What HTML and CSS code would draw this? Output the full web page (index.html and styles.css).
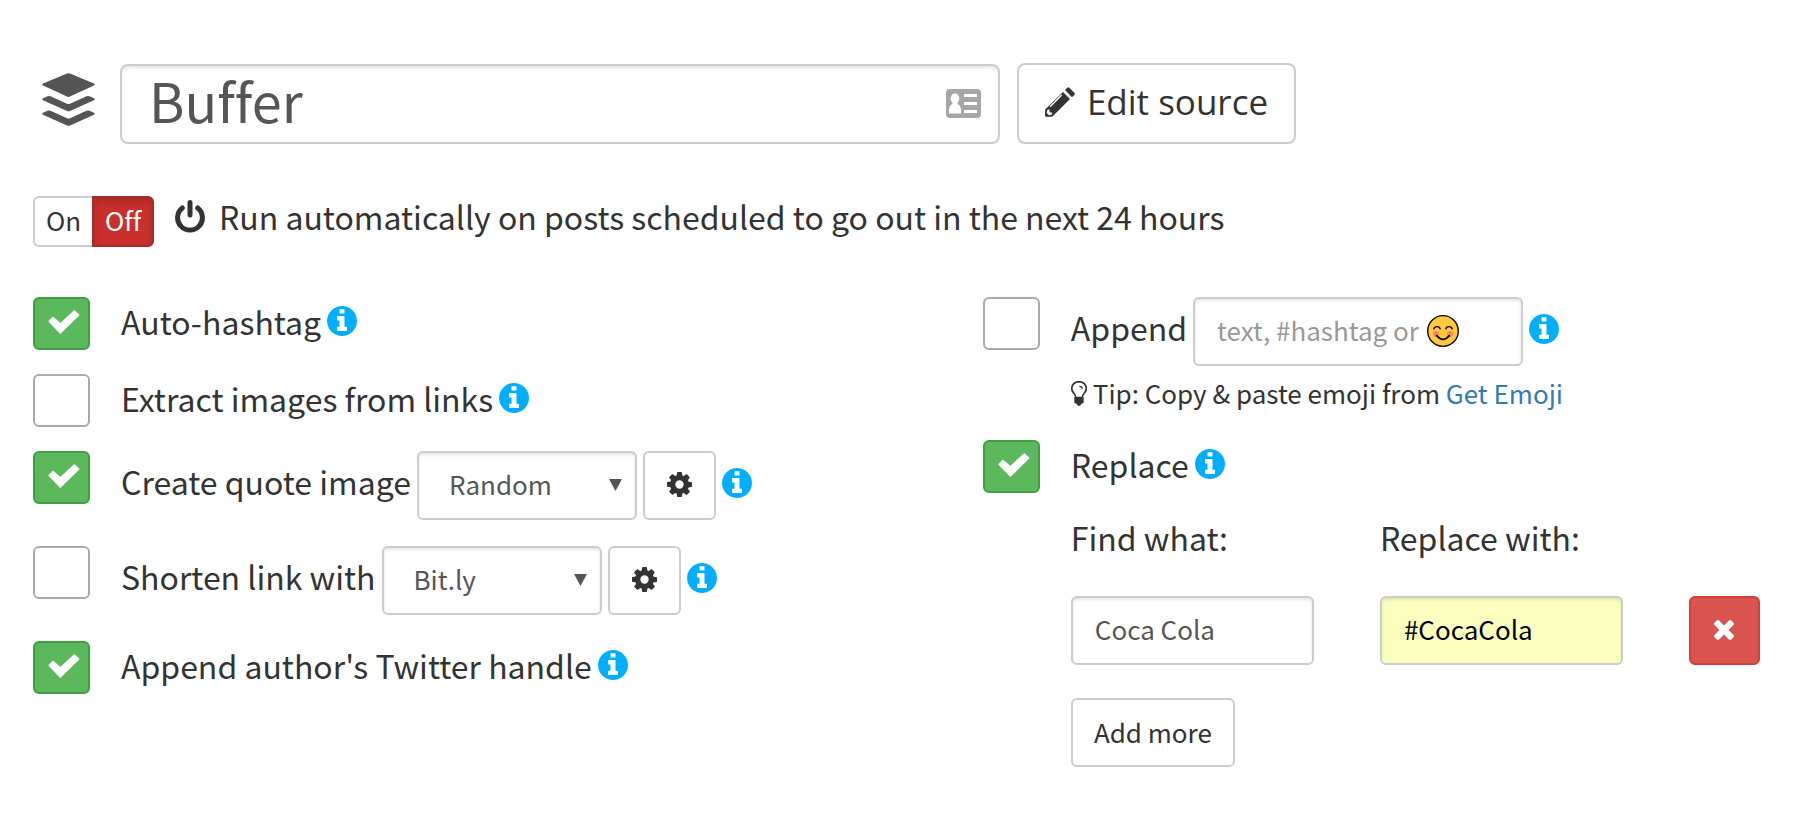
FILE: index.html
```html
<!DOCTYPE html>
<html lang="en">
<head>
  <meta charset="UTF-8">
  <title>Buffer</title>
  <meta name="viewport" content="width=device-width, initial-scale=1.0">
  <link rel="stylesheet" href="styles.css">
</head>
<body>
  <!-- shared icons -->
  <svg class="sprite" aria-hidden="true">
    <symbol id="info" viewBox="128 128 1536 1536">
      <path d="M1152 1376v-160q0-14-9-23t-23-9h-96v-512q0-14-9-23t-23-9h-320q-14 0-23 9t-9 23v160q0 14 9 23t23 9h96v320h-96q-14 0-23 9t-9 23v160q0 14 9 23t23 9h448q14 0 23-9t9-23zm-128-896v-160q0-14-9-23t-23-9h-192q-14 0-23 9t-9 23v160q0 14 9 23t23 9h192q14 0 23-9t9-23zm640 416q0 209-103 385.5t-279.5 279.5-385.5 103-385.5-103-279.5-279.5-103-385.5 103-385.5 279.5-279.5 385.5-103 385.5 103 279.5 279.5 103 385.5z"/>
    </symbol>
    <symbol id="check" viewBox="0 0 94 72">
      <path d="M3 34L14 23L36 42L78 3L91 15L36 69Z" stroke="currentColor" stroke-width="5" stroke-linejoin="round"/>
    </symbol>
    <symbol id="cog" viewBox="128 128 1536 1536">
      <path d="M1152 896q0-106-75-181t-181-75-181 75-75 181 75 181 181 75 181-75 75-181zm512-109v222q0 12-8 23t-20 13l-185 28q-19 54-39 91 35 50 107 138 10 12 10 25t-9 23q-27 37-99 108t-94 71q-12 0-26-9l-138-108q-44 23-91 38-16 136-29 186-7 28-36 28h-222q-14 0-24.5-8.5t-11.5-21.5l-28-184q-49-16-90-37l-141 107q-10 9-25 9-14 0-25-11-126-114-165-168-7-10-7-23 0-12 8-23 15-21 51-66.5t54-70.5q-27-50-41-99l-183-27q-13-2-21-12.5t-8-23.5v-222q0-12 8-23t19-13l186-28q14-46 39-92-40-57-107-138-10-12-10-24 0-10 9-23 26-36 98.5-107.5t94.5-71.5q13 0 26 10l138 107q44-23 91-38 16-136 29-186 7-28 36-28h222q14 0 24.5 8.5t11.5 21.5l28 184q49 16 90 37l142-107q9-9 24-9 13 0 25 10 129 119 165 170 7 8 7 22 0 12-8 23-15 21-51 66.5t-54 70.5q26 50 41 98l183 28q13 2 21 12.5t8 23.5z"/>
    </symbol>
    <symbol id="caret" viewBox="0 0 13 12">
      <path d="M0 0h13L6.5 12z"/>
    </symbol>
  </svg>

  <main class="page">
    <header class="header">
      <svg class="logo" viewBox="0 0 53 53" aria-hidden="true">
        <path d="M1 10.500L25 .5q1.500-.6 3 0L52 10.500q1.500 1 0 2L28 23.600q-1.500.6-3 0L1 12.500q-1.500-1 0-2z"/>
        <path d="M1 25.300L5.500 23.300q1.500-.5 3 0L25 30.800q1.500.6 3 0L44.500 23.300q1.500-.5 3 0L52 25.300q1.500 1 0 2L28 38q-1.500.6-3 0L1 27.300q-1.500-1 0-2z"/>
        <path d="M1 39.700L5.500 37.700q1.500-.5 3 0L25 45.200q1.500.6 3 0L44.500 37.700q1.500-.5 3 0L52 39.700q1.500 1 0 2L28 52.500q-1.500.6-3 0L1 41.700q-1.500-1 0-2z"/>
      </svg>
      <div class="name-box">
        <input class="field name" type="text" value="Buffer" aria-label="Name">
        <svg class="card-icon" viewBox="0 0 35 29" aria-hidden="true">
          <rect width="35" height="29" rx="4" fill="#a6a6a6"/>
          <g fill="#fff">
            <ellipse cx="9" cy="9.500" rx="4.300" ry="5"/>
            <path d="M6.500 13h5v2q3.500 1.500 3.500 6v3.500H3V21q0-4.500 3.500-6z"/>
            <path d="M18 5h13v3H18zM18 13h13v3H18zM18 21h13v3H18z"/>
          </g>
        </svg>
      </div>
      <button class="btn edit" type="button">
        <svg class="pencil" viewBox="0 0 90 90" aria-hidden="true">
          <path d="M54 15L75 36L24 87Q22 89 19 89H3Q0 89 0 86V71Q0 68 2 66Z"/>
          <path d="M60 9L66 3Q70-1 74 3L88 17Q92 21 87 25L81 31Z"/>
          <path d="M15 59L50 24" fill="none" stroke="#fff" stroke-width="4"/>
          <path d="M7 69L13 67L14 76L22 77L20 83L12 85L5 78Z" fill="#fff"/>
        </svg>
        Edit source
      </button>
    </header>

    <section class="auto">
      <div class="toggle">
        <button type="button">On</button><button class="active" type="button">Off</button>
      </div>
      <p class="auto-text">
        <svg class="power" viewBox="0 0 30 33" stroke="currentColor" aria-hidden="true">
          <path d="M7.300 8A12.400 12.400 0 1 0 22.700 8" stroke-width="5" stroke-linecap="round"/>
          <path d="M15 2.500V15" stroke-width="5" stroke-linecap="round"/>
        </svg>
        Run automatically on posts scheduled to go out in the next 24 hours
      </p>
    </section>

    <div class="columns">
      <section class="column">
        <div class="option">
          <span class="tick"><input type="checkbox" id="hashtag" checked><svg><use href="#check"/></svg></span>
          <div class="line">
            <label for="hashtag">Auto-hashtag</label>
            <svg class="info"><use href="#info"/></svg>
          </div>
        </div>
        <div class="option">
          <span class="tick"><input type="checkbox" id="extract"><svg><use href="#check"/></svg></span>
          <div class="line">
            <label for="extract">Extract images from links</label>
            <svg class="info"><use href="#info"/></svg>
          </div>
        </div>
        <div class="option">
          <span class="tick"><input type="checkbox" id="quote" checked><svg><use href="#check"/></svg></span>
          <div class="line controls">
            <label for="quote">Create quote image</label>
            <span class="select">
              <select class="field" aria-label="Quote image"><option>Random</option></select>
              <svg><use href="#caret"/></svg>
            </span>
            <button class="btn square" type="button" aria-label="Quote settings"><svg class="cog"><use href="#cog"/></svg></button>
            <svg class="info"><use href="#info"/></svg>
          </div>
        </div>
        <div class="option">
          <span class="tick"><input type="checkbox" id="shorten"><svg><use href="#check"/></svg></span>
          <div class="line controls">
            <label for="shorten">Shorten link with</label>
            <span class="select">
              <select class="field" aria-label="Link shortener"><option>Bit.ly</option></select>
              <svg><use href="#caret"/></svg>
            </span>
            <button class="btn square" type="button" aria-label="Shortener settings"><svg class="cog"><use href="#cog"/></svg></button>
            <svg class="info"><use href="#info"/></svg>
          </div>
        </div>
        <div class="option">
          <span class="tick"><input type="checkbox" id="author" checked><svg><use href="#check"/></svg></span>
          <div class="line">
            <label for="author">Append author's Twitter handle</label>
            <svg class="info"><use href="#info"/></svg>
          </div>
        </div>
      </section>

      <section class="column">
        <div class="option">
          <span class="tick"><input type="checkbox" id="append"><svg><use href="#check"/></svg></span>
          <div>
            <div class="line controls">
              <label for="append">Append</label>
              <span class="append-box">
                <input class="field" type="text" placeholder="text, #hashtag or" aria-label="Text to append">
                <svg class="smile" viewBox="0 0 96 96" aria-hidden="true">
                  <circle cx="48" cy="48" r="46" fill="#ffc83d" stroke="#000" stroke-width="4"/>
                  <circle cx="27" cy="57" r="9" fill="#ff8257"/>
                  <circle cx="69" cy="57" r="9" fill="#ff8257"/>
                  <path d="M20 43Q22 35 30 35T40 43M56 43Q58 35 66 35T76 43" fill="none" stroke="#000" stroke-width="4"/>
                  <path d="M29 62Q48 84 67 62" fill="none" stroke="#000" stroke-width="5" stroke-linecap="round"/>
                </svg>
              </span>
              <svg class="info"><use href="#info"/></svg>
            </div>
            <p class="tip">
              <svg class="bulb" viewBox="0 0 48 75" aria-hidden="true">
                <path d="M14 50Q14 43 8 36Q2 30 2 22Q4 3 24 2Q44 3 46 22Q46 30 40 36Q34 43 34 50Z" fill="none" stroke="currentColor" stroke-width="5"/>
                <path d="M10 49H38V65L31 69Q28 75 24 75T17 69L10 65Z"/>
                <path d="M25 16Q34 16 34 23" fill="none" stroke="currentColor" stroke-width="4"/>
              </svg>
              <span>Tip: Copy &amp; paste emoji from <a href="#">Get Emoji</a></span>
            </p>
          </div>
        </div>
        <div class="option">
          <span class="tick"><input type="checkbox" id="replace" checked><svg><use href="#check"/></svg></span>
          <div>
            <div class="line">
              <label for="replace">Replace</label>
              <svg class="info"><use href="#info"/></svg>
            </div>
            <div class="replace">
              <label for="find">Find what:</label>
              <label class="wide" for="with">Replace with:</label>
              <input class="field" type="text" id="find" value="Coca Cola">
              <input class="field filled" type="text" id="with" value="#CocaCola">
              <button class="btn danger" type="button" aria-label="Remove">
                <svg class="times" viewBox="302 366 1188 1188"><path d="M1490 1322q0 40-28 68l-136 136q-28 28-68 28t-68-28l-294-294-294 294q-28 28-68 28t-68-28l-136-136q-28-28-28-68t28-68l294-294-294-294q-28-28-28-68t28-68l136-136q28-28 68-28t68 28l294 294 294-294q28-28 68-28t68 28l136 136q28 28 28 68t-28 68l-294 294 294 294q28 28 28 68z"/></svg>
              </button>
              <button class="btn add" type="button">Add more</button>
            </div>
          </div>
        </div>
      </section>
    </div>
  </main>
</body>
</html>
```
FILE: styles.css
```css
* {
  margin: 0;
  padding: 0;
  box-sizing: border-box;
}

body {
  background: #fff;
  color: #333;
  font-family: "Noto Sans CJK SC", "Open Sans", sans-serif;
  font-size: 32px;
  font-variant-ligatures: none;
  line-height: 48px;
}

svg {
  display: block;
  flex: none;
  fill: currentColor;
}

.sprite {
  position: absolute;
  width: 0;
  height: 0;
}

.page {
  padding: 63px 36px 60px 33px;
}

/* Form controls */
.field,
.btn {
  height: 69px;
  padding-bottom: 2px;
  border: 2px solid #ccc;
  border-radius: 6px;
  background: #fff;
  color: #333;
  font-family: inherit;
  font-size: 26px;
  font-variant-ligatures: none;
}

.field {
  width: 100%;
  min-width: 0;
  padding: 0 22px 4px;
  color: #555;
  box-shadow: inset 0 2px 3px rgba(0, 0, 0, 0.1);
}

.field::placeholder {
  color: #999;
  opacity: 1;
}

.btn {
  display: flex;
  align-items: center;
  justify-content: center;
  cursor: pointer;
}

/* Header */
.header {
  display: flex;
  align-items: center;
}

.logo {
  width: 53px;
  height: 53px;
  margin: 0 25px 8px 9px;
  color: #555;
}

.name-box {
  position: relative;
  width: 880px;
}

.name {
  display: block;
  height: 80px;
  padding: 0 80px 8px 27px;
  border-radius: 8px;
  font-size: 54px;
}

.card-icon {
  position: absolute;
  top: 25px;
  right: 19px;
  width: 35px;
  height: 29px;
}

.edit {
  gap: 12px;
  width: 279px;
  height: 81px;
  margin-left: 17px;
  padding-bottom: 4px;
  border-radius: 8px;
  font-family: "Open Sans", sans-serif;
  font-size: 35px;
  white-space: nowrap;
}

.pencil {
  width: 30px;
  height: 30px;
}

/* On / off row */
.auto {
  display: flex;
  align-items: center;
  margin: 48px 0 47px;
}

.toggle {
  display: flex;
}

.toggle button {
  width: 59px;
  height: 51px;
  padding-bottom: 3px;
  border: 2px solid #ccc;
  border-right: 0;
  border-radius: 6px 0 0 6px;
  background: #fff;
  color: #333;
  font-family: inherit;
  font-size: 26px;
  font-variant-ligatures: none;
}

.toggle .active {
  width: 62px;
  border: 2px solid #ac2925;
  border-radius: 0 6px 6px 0;
  background: #c9302c;
  color: #fff;
  box-shadow: inset 0 4px 6px rgba(0, 0, 0, 0.15);
}

.auto-text {
  display: flex;
  align-items: center;
  gap: 14px;
  margin-left: 21px;
  padding-bottom: 10px;
}

.power {
  width: 30px;
  height: 33px;
  fill: none;
}

/* Options */
.columns {
  display: grid;
  grid-template-columns: 11fr 9fr;
}

.option {
  display: grid;
  grid-template-columns: 57px 1fr;
  column-gap: 31px;
  margin-bottom: 23px;
}

.tick {
  position: relative;
  height: 53px;
}

.tick input {
  display: block;
  width: 57px;
  height: 53px;
  appearance: none;
  border: 2px solid #aaa;
  border-radius: 6px;
  background: #fff;
}

.tick input:checked {
  border-color: #419f41;
  background: #5cb85c;
}

.tick svg {
  display: none;
  position: absolute;
  top: 13px;
  left: 15px;
  width: 32px;
  height: 24px;
  color: #fff;
  pointer-events: none;
}

.tick input:checked + svg {
  display: block;
}

.line {
  display: flex;
  align-items: center;
  gap: 6px;
}

.line label {
  padding-bottom: 6px;
  white-space: nowrap;
}

.controls {
  margin-bottom: 3px;
}

.controls label {
  padding-bottom: 9px;
}

.info {
  width: 30px;
  height: 30px;
  margin-bottom: 6px;
  color: #00aeff;
}

.select {
  position: relative;
  width: 220px;
}

.select .field {
  display: block;
  padding: 0 30px 4px;
  appearance: none;
}

.select svg {
  position: absolute;
  top: 28px;
  right: 15px;
  width: 13px;
  height: 12px;
  color: #555;
  pointer-events: none;
}

.square {
  width: 73px;
}

.cog {
  width: 25px;
  height: 25px;
}

.append-box {
  position: relative;
  width: 330px;
}

.append-box .field {
  display: block;
}

.smile {
  position: absolute;
  top: 18px;
  left: 234px;
  width: 32px;
  height: 32px;
  overflow: visible;
}

.tip {
  display: flex;
  align-items: center;
  gap: 6px;
  font-size: 26px;
}

.bulb {
  width: 16px;
  height: 25px;
}

a {
  color: #337ab7;
  text-decoration: none;
}

/* Find and replace */
.replace {
  display: grid;
  grid-template-columns: 1fr 1fr 71px;
  gap: 33px 66px;
  padding-top: 19px;
}

.replace label {
  padding-bottom: 2px;
}

.replace .wide {
  grid-column: 2 / 4;
}

.replace .filled {
  background: #faffbd;
  color: #000;
}

.danger {
  border-color: #d43f3a;
  background: #d9534f;
  color: #fff;
}

.times {
  width: 20px;
  height: 20px;
}

.add {
  width: 164px;
}
```
